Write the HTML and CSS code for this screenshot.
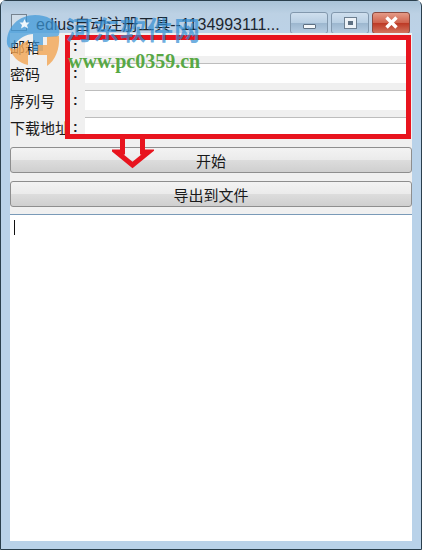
FILE: index.html
```html
<!DOCTYPE html>
<html>
<head>
<meta charset="utf-8">
<title>edius</title>
<link rel="stylesheet" href="styles.css">
</head>
<body>
<div class="window">
  <div class="titlebar">
    <svg class="app-icon" width="16" height="17" viewBox="0 0 16 17"><rect x="0.5" y="0.5" width="15" height="16" fill="#cfdde9" stroke="#76838f"/></svg>
    <span class="title">edius自动注册工具--1134993111...</span>
    <div class="controls">
      <div class="ctl"><span class="min-glyph"></span></div>
      <div class="ctl"><span class="max-glyph"></span></div>
      <div class="ctl close"><svg width="15" height="13" viewBox="0 0 15 13"><path d="M2.5 1.5 L12.5 11.5 M12.5 1.5 L2.5 11.5" stroke="#fff" stroke-width="3.4"/></svg></div>
    </div>
  </div>
  <div class="client">
    <div class="form">
      <div class="row"><span class="lbl">邮箱</span><span class="colon">:</span><span class="field"></span></div>
      <div class="row"><span class="lbl">密码</span><span class="colon">:</span><span class="field"></span></div>
      <div class="row"><span class="lbl">序列号</span><span class="colon">:</span><span class="field"></span></div>
      <div class="row"><span class="lbl">下载地址</span><span class="colon">:</span><span class="field"></span></div>
    </div>
    <div class="btn">开始</div>
    <div class="btn">导出到文件</div>
    <div class="output"><span class="caret"></span></div>
  </div>

  <!-- stuff drawn on top of the screenshot -->
  <div class="redbox"></div>
  <svg class="arrow" width="42" height="32" viewBox="0 0 42 32"><path d="M10.5 0 V14 H4.5 L20.5 27 L36.5 14 H30.5 V0" fill="none" stroke="#e8141e" stroke-width="5"/></svg>
  <svg class="logo" width="60" height="56" viewBox="0 0 60 56">
    <path d="M2 30 C1 13 14 1 30 1 C42 1 51 6 54 15 C55 19 54 22 52 23 L38 23 L38 37 L28 37 L28 20 C22 20 13 24 9 32 C7 35 4 36 2 30 Z" fill="#3a97d8" opacity="0.7"/>
    <path d="M19.5 5 L21 8.5 L24.5 8.5 L22 11 L23 14.5 L19.5 12.5 L16 14.5 L17 11 L14.5 8.5 L18 8.5 Z" fill="#fff" opacity="0.9"/>
    <path d="M4 33 C8 36 12 36 14 32 L23 26 L23 51 C13 49 7 42 4 33 Z" fill="#f2a552" opacity="0.8"/>
    <path d="M33 31 H42 V23 L54 22 C55 35 50 47 42 52 L42 41 H33 Z" fill="#f2a552" opacity="0.8"/>
  </svg>
  <span class="wm-cn">河东软件网</span>
  <span class="wm-url">www.pc0359.cn</span>
</div>
</body>
</html>
```
FILE: styles.css
```css
html, body {
  margin: 0;
  padding: 0;
}

body {
  width: 422px;
  height: 550px;
  overflow: hidden;
  background: #fff;
  font-family: "Liberation Sans", "Noto Sans CJK SC", sans-serif;
  font-size: 15px;
  color: #1a1a1a;
}

.window {
  position: relative;
  box-sizing: border-box;
  width: 422px;
  height: 550px;
  display: flex;
  flex-direction: column;
  padding: 0 9px 8px 9px;
  background: #b9d2e9;
  border: 1px solid #2a3f4d;
  border-radius: 6px 6px 0 0;
}

.titlebar {
  box-sizing: border-box;
  height: 32px;
  flex: none;
  margin: 0 -8px;
  padding: 11px 10px 0 9px;
  display: flex;
  align-items: center;
  gap: 9px;
  background: linear-gradient(#a9c3d8, #bcd1e4 40%, #bcd2e7);
}

.app-icon {
  flex: none;
}

.title {
  flex: 1;
  font-size: 16px;
  white-space: nowrap;
  color: #1c2630;
}

.controls {
  display: flex;
  gap: 3px;
}

.ctl {
  box-sizing: border-box;
  width: 38px;
  height: 22px;
  display: flex;
  align-items: center;
  justify-content: center;
  border: 1px solid #8298ad;
  border-radius: 3px;
  background: linear-gradient(#cfdfee, #b9cfe3 48%, #9db7cf 52%, #b6cde2);
}

.close {
  border-color: #8a4a40;
  background: linear-gradient(#e59a86, #d0644f 48%, #bd3a26 52%, #d2745e);
}

.min-glyph {
  box-sizing: border-box;
  width: 13px;
  height: 5px;
  margin-top: 7px;
  background: #f4f8fb;
  border: 1px solid #5f7183;
  border-radius: 1px;
}

.max-glyph {
  box-sizing: border-box;
  width: 11px;
  height: 10px;
  background: #5f7183;
  border: 3px solid #eef3f8;
  outline: 1px solid #6d7f90;
}

.client {
  flex: 1;
  min-height: 0;
  display: flex;
  flex-direction: column;
  background: #f0f0f0;
}

.form {
  padding-top: 3px;
  display: flex;
  flex-direction: column;
  gap: 7px;
}

.row {
  height: 20px;
  display: flex;
  align-items: center;
}

.lbl {
  width: 63px;
  flex: none;
  white-space: nowrap;
}

.colon {
  width: 12px;
  flex: none;
  font-size: 14px;
  font-weight: bold;
}

.field {
  width: 323px;
  height: 20px;
  background: #fff;
  border-top: 1px solid #bdbdbd;
  box-sizing: border-box;
}

.row:first-child .field {
  border-top: 0;
}

.btn {
  box-sizing: border-box;
  flex: none;
  height: 26px;
  display: flex;
  align-items: center;
  justify-content: center;
  border: 1px solid #8e8e8e;
  border-radius: 3px;
  background: linear-gradient(#f3f3f3, #ebebeb 48%, #dcdcdc 52%, #cfcfcf);
}

.form + .btn {
  margin-top: 10px;
}

.btn + .btn {
  margin-top: 8px;
}

.output {
  flex: 1;
  margin-top: 7px;
  padding: 5px 4px;
  background: #fff;
  border-top: 1px solid #7a9ab8;
}

.caret {
  display: block;
  width: 1px;
  height: 15px;
  background: #111;
}

.redbox {
  position: absolute;
  left: 64px;
  top: 34px;
  width: 336px;
  height: 94px;
  border: 5px solid #e8141e;
}

.arrow {
  position: absolute;
  left: 111px;
  top: 137px;
}

.logo {
  position: absolute;
  left: 4px;
  top: 13px;
}

.wm-cn {
  position: absolute;
  left: 65px;
  top: 17px;
  font-size: 26px;
  line-height: 1;
  font-weight: bold;
  letter-spacing: 1px;
  color: rgba(48, 140, 210, 0.7);
  white-space: nowrap;
}

.wm-url {
  position: absolute;
  left: 67px;
  top: 50px;
  font-family: "Liberation Serif", serif;
  font-size: 20px;
  line-height: 1;
  font-weight: bold;
  color: #58a845;
  white-space: nowrap;
}
```
